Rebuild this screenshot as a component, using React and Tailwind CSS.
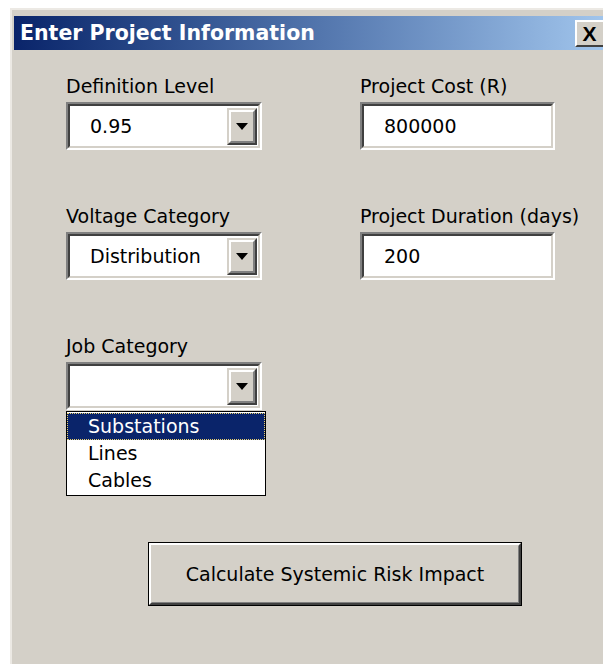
import { useState } from 'react';

const FONT = { fontFamily: '"DejaVu Sans", Tahoma, sans-serif' };

// classic win32 sunken edge around a white field
const Sunken = ({ className = '', children }) => (
  <div className={`border-2 border-t-[#808080] border-l-[#808080] border-b-white border-r-white ${className}`}>
    <div className="h-full border-2 border-t-[#404040] border-l-[#404040] border-b-[#d4d0c8] border-r-[#d4d0c8] bg-white">
      {children}
    </div>
  </div>
);

const DropButton = () => (
  <div className="h-full w-[30px] border-2 border-t-[#d4d0c8] border-l-[#d4d0c8] border-b-[#404040] border-r-[#404040] bg-[#d4d0c8]">
    <div className="flex h-full items-center justify-center border-2 border-t-white border-l-white border-b-[#808080] border-r-[#808080]">
      <svg width="12" height="7" viewBox="0 0 12 7">
        <path d="M0 0h12L6 7z" fill="#000" />
      </svg>
    </div>
  </div>
);

const Combo = ({ value }) => (
  <Sunken className="h-[48px] w-[196px]">
    <div className="flex h-full items-center pt-[2px] pr-[1px] pb-[1px]">
      <span className="flex-1 pl-[20px] text-[19px] text-black">{value}</span>
      <DropButton />
    </div>
  </Sunken>
);

const TextBox = ({ value }) => (
  <Sunken className="h-[48px] w-[195px]">
    <div className="flex h-full items-center pl-[20px] text-[19px] text-black">{value}</div>
  </Sunken>
);

const Field = ({ label, children }) => (
  <div className="flex flex-col">
    <div className="h-[28px] text-[19px] leading-[24px] text-black">{label}</div>
    {children}
  </div>
);

export default function App() {
  const [job] = useState('Substations');
  const jobOptions = ['Substations', 'Lines', 'Cables'];

  return (
    <div className="h-[664px] w-[603px] overflow-hidden bg-white pt-[8px] pl-[10px]" style={FONT}>
      <div className="h-[700px] w-[610px] border-t-2 border-l-2 border-t-[#ece9e4] border-l-[#ece9e4] bg-[#d4d0c8] pt-[6px] pl-[2px]">
        {/* title bar */}
        <div className="flex h-[34px] items-center bg-gradient-to-r from-[#0a246a] to-[#a6caf0] pl-[6px]">
          <span className="text-[20.5px] font-bold text-white">Enter Project Information</span>
          <div className="ml-auto mr-[13px] flex h-[27px] w-[32px] items-center justify-center border-2 border-t-white border-l-white border-b-[#404040] border-r-[#404040] bg-[#d4d0c8] pr-[3px]">
            <span
              className="text-[21px] font-bold leading-none text-black"
              style={{ fontFamily: '"Liberation Sans", Arial, sans-serif' }}
            >
              X
            </span>
          </div>
        </div>

        {/* form */}
        <div className="relative pl-[52px] pt-[24px]">
          <div className="grid grid-cols-[294px_1fr] gap-y-[54px]">
            <Field label="Definition Level">
              <Combo value="0.95" />
            </Field>
            <Field label="Project Cost (R)">
              <TextBox value="800000" />
            </Field>
            <Field label="Voltage Category">
              <Combo value="Distribution" />
            </Field>
            <Field label="Project Duration (days)">
              <TextBox value="200" />
            </Field>
            <Field label="Job Category">
              <div className="relative">
                <Combo value="" />
                {/* open drop-down list */}
                <div className="absolute left-0 top-[49px] w-[200px] border border-black bg-white py-[1px]">
                  {jobOptions.map((opt) => (
                    <div
                      key={opt}
                      className={`h-[27px] pl-[20px] text-[19px] leading-[25px] ${
                        opt === job
                          ? 'border border-dotted border-[#e8d070] bg-[#0a246a] text-white'
                          : 'border border-transparent text-black'
                      }`}
                    >
                      {opt}
                    </div>
                  ))}
                </div>
              </div>
            </Field>
          </div>

          <div className="mt-[132px] ml-[82px] h-[64px] w-[374px] border border-black">
            <div className="h-full border-2 border-t-white border-l-white border-b-[#404040] border-r-[#404040] bg-[#d4d0c8]">
              <div className="flex h-full items-center justify-center border border-t-[#d4d0c8] border-l-[#d4d0c8] border-b-[#808080] border-r-[#808080] text-[19px] text-black">
                Calculate Systemic Risk Impact
              </div>
            </div>
          </div>
        </div>
      </div>
    </div>
  );
}
